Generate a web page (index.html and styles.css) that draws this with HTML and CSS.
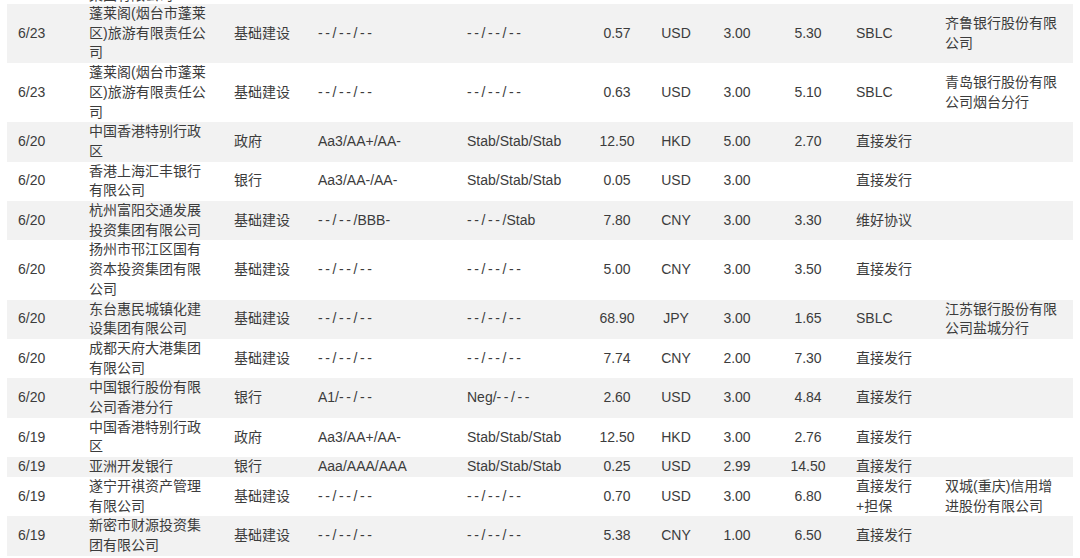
FILE: index.html
```html
<!DOCTYPE html>
<html lang="zh-CN">
<head>
<meta charset="utf-8">
<title>发行列表</title>
<link rel="stylesheet" href="styles.css">
</head>
<body>
<table class="tbl">
<colgroup>
<col class="c1"><col class="c2"><col class="c3"><col class="c4"><col class="c5"><col class="c6"><col class="c7"><col class="c8"><col class="c9"><col class="c10"><col class="c11">
</colgroup>
<tbody>
<tr class="cut"><td></td><td>集团有限公司</td><td></td><td></td><td></td><td></td><td></td><td></td><td></td><td></td><td></td></tr>
<tr><td>6/23</td><td>蓬莱阁(烟台市蓬莱区)旅游有限责任公司</td><td>基础建设</td><td class="d">--/--/--</td><td class="d">--/--/--</td><td>0.57</td><td>USD</td><td>3.00</td><td>5.30</td><td>SBLC</td><td>齐鲁银行股份有限公司</td></tr>
<tr><td>6/23</td><td>蓬莱阁(烟台市蓬莱区)旅游有限责任公司</td><td>基础建设</td><td class="d">--/--/--</td><td class="d">--/--/--</td><td>0.63</td><td>USD</td><td>3.00</td><td>5.10</td><td>SBLC</td><td>青岛银行股份有限公司烟台分行</td></tr>
<tr><td>6/20</td><td>中国香港特别行政区</td><td>政府</td><td>Aa3/AA+/AA-</td><td>Stab/Stab/Stab</td><td>12.50</td><td>HKD</td><td>5.00</td><td>2.70</td><td>直接发行</td><td></td></tr>
<tr><td>6/20</td><td>香港上海汇丰银行有限公司</td><td>银行</td><td>Aa3/AA-/AA-</td><td>Stab/Stab/Stab</td><td>0.05</td><td>USD</td><td>3.00</td><td></td><td>直接发行</td><td></td></tr>
<tr><td>6/20</td><td>杭州富阳交通发展投资集团有限公司</td><td>基础建设</td><td><span class="d">--/--</span>/BBB-</td><td><span class="d">--/--</span>/Stab</td><td>7.80</td><td>CNY</td><td>3.00</td><td>3.30</td><td>维好协议</td><td></td></tr>
<tr><td>6/20</td><td>扬州市邗江区国有资本投资集团有限公司</td><td>基础建设</td><td class="d">--/--/--</td><td class="d">--/--/--</td><td>5.00</td><td>CNY</td><td>3.00</td><td>3.50</td><td>直接发行</td><td></td></tr>
<tr><td>6/20</td><td>东台惠民城镇化建设集团有限公司</td><td>基础建设</td><td class="d">--/--/--</td><td class="d">--/--/--</td><td>68.90</td><td>JPY</td><td>3.00</td><td>1.65</td><td>SBLC</td><td>江苏银行股份有限公司盐城分行</td></tr>
<tr><td>6/20</td><td>成都天府大港集团有限公司</td><td>基础建设</td><td class="d">--/--/--</td><td class="d">--/--/--</td><td>7.74</td><td>CNY</td><td>2.00</td><td>7.30</td><td>直接发行</td><td></td></tr>
<tr><td>6/20</td><td>中国银行股份有限公司香港分行</td><td>银行</td><td>A1/<span class="d">--/--</span></td><td>Neg/<span class="d">--/--</span></td><td>2.60</td><td>USD</td><td>3.00</td><td>4.84</td><td>直接发行</td><td></td></tr>
<tr><td>6/19</td><td>中国香港特别行政区</td><td>政府</td><td>Aa3/AA+/AA-</td><td>Stab/Stab/Stab</td><td>12.50</td><td>HKD</td><td>3.00</td><td>2.76</td><td>直接发行</td><td></td></tr>
<tr><td>6/19</td><td>亚洲开发银行</td><td>银行</td><td>Aaa/AAA/AAA</td><td>Stab/Stab/Stab</td><td>0.25</td><td>USD</td><td>2.99</td><td>14.50</td><td>直接发行</td><td></td></tr>
<tr><td>6/19</td><td>遂宁开祺资产管理有限公司</td><td>基础建设</td><td class="d">--/--/--</td><td class="d">--/--/--</td><td>0.70</td><td>USD</td><td>3.00</td><td>6.80</td><td>直接发行+担保</td><td>双城(重庆)信用增进股份有限公司</td></tr>
<tr><td>6/19</td><td>新密市财源投资集团有限公司</td><td>基础建设</td><td class="d">--/--/--</td><td class="d">--/--/--</td><td>5.38</td><td>CNY</td><td>1.00</td><td>6.50</td><td>直接发行</td><td></td></tr>
</tbody>
</table>
</body>
</html>
```
FILE: styles.css
```css
html, body {
  margin: 0;
  padding: 0;
  background: #ffffff;
}
body {
  font-family: "Liberation Sans", "Noto Sans CJK SC", sans-serif;
  font-size: 14px;
  color: #3c3c3c;
  overflow: hidden;
}
.tbl {
  border-collapse: collapse;
  table-layout: fixed;
  width: 1066px;
  margin: -14.2px 0 0 7px;
}
.c1 { width: 78px; }
.c2 { width: 140px; }
.c3 { width: 85px; }
.c4 { width: 150px; }
.c5 { width: 125px; }
.c6 { width: 64px; }
.c7 { width: 54px; }
.c8 { width: 68px; }
.c9 { width: 74px; }
.c10 { width: 90px; }
.c11 { width: 138px; }

.tbl td {
  padding: 0;
  line-height: 19.7px;
  vertical-align: middle;
  text-align: left;
}
.tbl tr:nth-child(even) td {
  background: #f2f2f2;
}
.tbl td:nth-child(1) { padding-left: 11px; }
.tbl td:nth-child(2) { padding-left: 4px; padding-right: 18px; }
.tbl td:nth-child(3) { padding-left: 9px; }
.tbl td:nth-child(4) { padding-left: 8px; }
.tbl td:nth-child(5) { padding-left: 7px; }
.tbl td:nth-child(6),
.tbl td:nth-child(7),
.tbl td:nth-child(8),
.tbl td:nth-child(9) { text-align: center; }
.tbl td:nth-child(10) { padding-left: 11px; padding-right: 19px; }
.tbl td:nth-child(11) { padding-left: 10px; padding-right: 10px; }

.tbl tr.cut td {
  line-height: 18.2px;
  height: 18.2px;
}
.d {
  letter-spacing: 2.6px;
}
```
